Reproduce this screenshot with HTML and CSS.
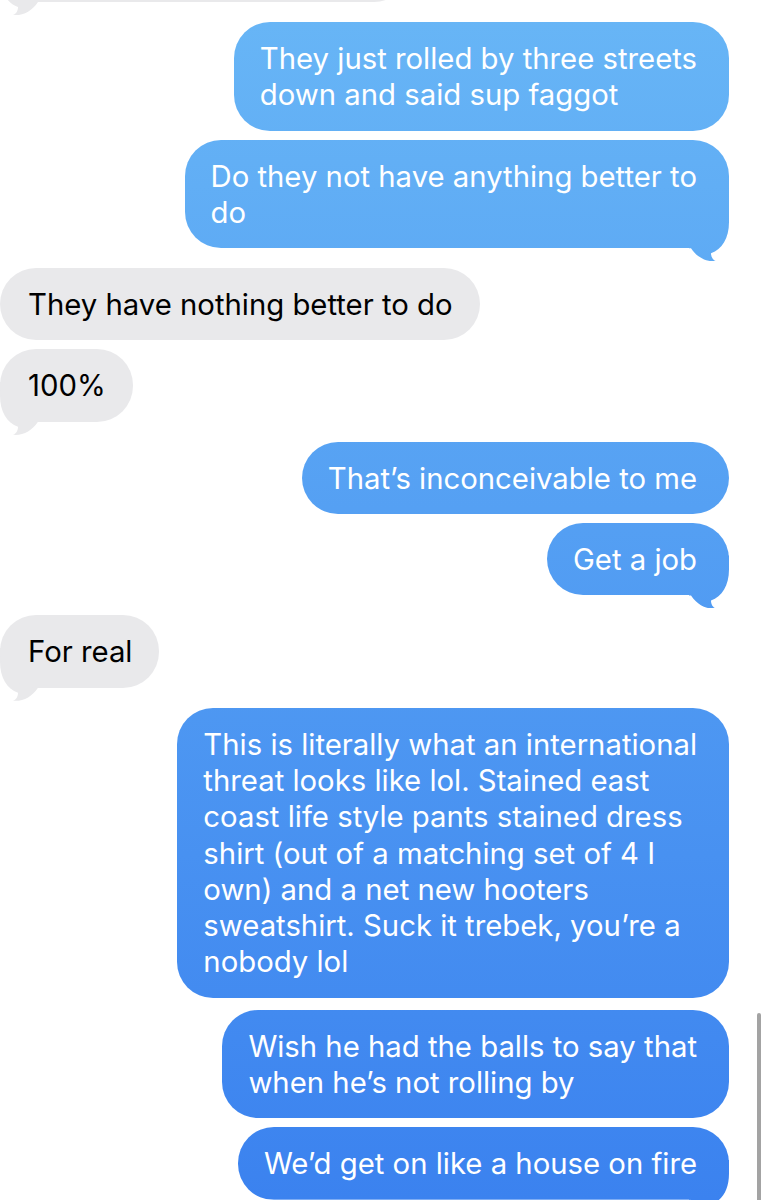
FILE: index.html
```html
<!DOCTYPE html>
<html lang="en">
<head>
    <meta charset="UTF-8">
    <meta name="viewport" content="width=device-width, initial-scale=1.0">
    <title>Messages</title>
    <link rel="stylesheet" href="styles.css">
</head>
<body>
    <div class="thread">
        <!-- previous message, scrolled mostly out of view -->
        <div class="msg in tail cut"></div>

        <div class="msg out gap">They just rolled by three streets<br>down and said sup faggot</div>
        <div class="msg out tail">Do they not have anything better to<br>do</div>

        <div class="msg in gap">They have nothing better to do</div>
        <div class="msg in tail">100%</div>

        <div class="msg out gap">That’s inconceivable to me</div>
        <div class="msg out tail">Get a job</div>

        <div class="msg in tail gap">For real</div>

        <div class="msg out gap">This is literally what an international<br>threat looks like lol. Stained east<br>coast life style pants stained dress<br>shirt (out of a matching set of 4 I<br>own) and a net new hooters<br>sweatshirt. Suck it trebek, you’re a<br>nobody lol</div>
        <div class="msg out wide-gap">Wish he had the balls to say that<br>when he’s not rolling by</div>
        <div class="msg out tail">We’d get on like a house on fire</div>
    </div>

    <div class="scrollbar"></div>
</body>
</html>
```

FILE: styles.css
```css
body {
    margin: 0;
    background: #fff;
    font-family: Inter, "Liberation Sans", sans-serif;
    overflow: hidden;
    height: 1200px;
}

.thread {
    display: flex;
    flex-direction: column;
}

.msg {
    position: relative;
    padding: 19px 32px 17px 26px;
    border-radius: 36px;
    font-size: 29.3px;
    line-height: 36.3px;
    white-space: nowrap;
    margin-top: 9px;
}

.msg.gap {
    margin-top: 20px;
}

.msg.wide-gap {
    margin-top: 12px;
}

.out {
    align-self: flex-end;
    margin-right: 38px;
    color: #fff;
    background: linear-gradient(to bottom, #68b6f6 0%, #3b82ef 100%) fixed;
}

.in {
    align-self: flex-start;
    padding-left: 28px;
    padding-right: 27px;
    color: #000;
    background: #e9e9eb;
}

.cut {
    width: 355px;
    height: 36px;
    margin-top: -70px;
}

/* bubble tail, cut from a box hanging off the bottom corner */
.tail::after {
    content: "";
    position: absolute;
    z-index: -1;
    right: 0;
    bottom: -13px;
    width: 40px;
    height: 53px;
    background: inherit;
    clip-path: path('M0,0 H40 V14 C40,30 33,41 22,45 C22,49 24,52 27,53 C17,54 8,49 2,40 H0 Z');
}

.in.tail::after {
    right: auto;
    left: 0;
    transform: scaleX(-1);
}

.scrollbar {
    position: absolute;
    top: 1013px;
    right: 6px;
    width: 4px;
    height: 200px;
    border-radius: 2px;
    background: #a3a3a3;
}
```
